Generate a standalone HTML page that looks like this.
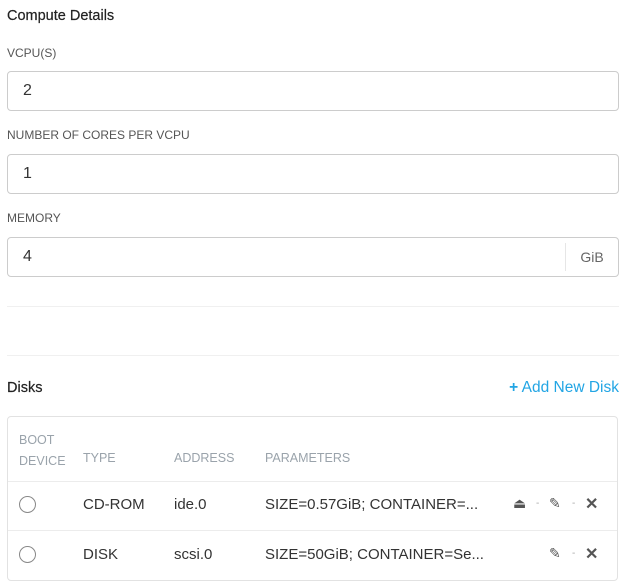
<!DOCTYPE html>
<html><head><meta charset="utf-8"><style>
body{margin:0;width:621px;height:583px;background:#fff;font-family:"Liberation Sans",sans-serif;color:#333;position:relative;overflow:hidden}
.a{position:absolute}
.h{font-size:14.5px;color:#222;-webkit-text-stroke:0.2px #222}
.lbl{font-size:12px;color:#555}
.in{position:absolute;left:7px;width:610px;height:38px;border:1px solid #ccc;border-radius:4px;font-size:16px;color:#333;line-height:38px;text-indent:15px}
.sep{position:absolute;left:7px;width:612px;height:1px;background:#f0f0f0}
.th{font-size:12.5px;color:#9aa3ab}
.td{font-size:15px;color:#333}
.rad{position:absolute;left:19px;width:15px;height:15px;border:1px solid #888;border-radius:50%}
.ic{font-size:14px;color:#555}
.dot{font-size:10px;color:#aaa}
</style></head><body>
<div class="a h" style="left:7px;top:8px">Compute Details</div>
<div class="a lbl" style="left:7px;top:46px">VCPU(S)</div>
<div class="in" style="top:71px">2</div>
<div class="a lbl" style="left:7px;top:128px">NUMBER OF CORES PER VCPU</div>
<div class="in" style="top:154px">1</div>
<div class="a lbl" style="left:7px;top:211px">MEMORY</div>
<div class="in" style="top:237px">4<div style="position:absolute;right:0;top:5px;height:28px;width:52px;border-left:1px solid #e6e6e6;text-indent:0;line-height:28px;text-align:center;color:#666;font-size:14px">GiB</div></div>
<div class="sep" style="top:306px"></div>
<div class="sep" style="top:355px"></div>
<div class="a h" style="left:7px;top:380px">Disks</div>
<div class="a" style="right:2px;top:379px;font-size:15.5px;color:#22a5e4"><b>+</b> Add New Disk</div>
<div class="a" style="left:7px;top:416px;width:609px;height:163px;border:1px solid #e2e2e2;border-radius:4px"></div>
<div class="a th" style="left:19px;top:430px;line-height:21px">BOOT<br>DEVICE</div>
<div class="a th" style="left:83px;top:451px">TYPE</div>
<div class="a th" style="left:174px;top:451px">ADDRESS</div>
<div class="a th" style="left:265px;top:451px">PARAMETERS</div>
<div class="a" style="left:8px;top:481px;width:609px;height:1px;background:#ececec"></div>
<div class="a" style="left:8px;top:530px;width:609px;height:1px;background:#ececec"></div>
<div class="rad" style="top:496px"></div>
<div class="a td" style="left:83px;top:496px">CD-ROM</div>
<div class="a td" style="left:174px;top:496px">ide.0</div>
<div class="a td" style="left:265px;top:496px">SIZE=0.57GiB; CONTAINER=...</div>
<div class="a ic" style="left:513px;top:495px">⏏</div>
<div class="a dot" style="left:536px;top:498px">-</div>
<div class="a ic" style="left:549px;top:495px">✎</div>
<div class="a dot" style="left:572px;top:498px">-</div>
<div class="a ic" style="left:585px;top:494px;font-weight:bold;font-size:16px">✕</div>
<div class="rad" style="top:546px"></div>
<div class="a td" style="left:83px;top:546px">DISK</div>
<div class="a td" style="left:174px;top:546px">scsi.0</div>
<div class="a td" style="left:265px;top:546px">SIZE=50GiB; CONTAINER=Se...</div>
<div class="a ic" style="left:549px;top:545px">✎</div>
<div class="a dot" style="left:572px;top:548px">-</div>
<div class="a ic" style="left:585px;top:544px;font-weight:bold;font-size:16px">✕</div>
</body></html>
